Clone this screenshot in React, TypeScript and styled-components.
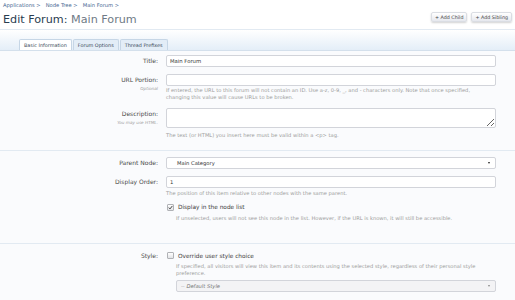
import styled, { createGlobalStyle } from 'styled-components';

const GlobalStyle = createGlobalStyle`
  body {
    margin: 0;
    background: #ffffff;
    font-family: "DejaVu Sans", "Liberation Sans", sans-serif;
    color: #333;
  }
`;

const Header = styled.div`
  padding: 0 3px;
`;

const Breadcrumb = styled.div`
  display: flex;
  gap: 5px;
  height: 10px;
  font-size: 5.2px;
  line-height: 10px;
  color: #3f6590;
`;

const TitleRow = styled.div`
  display: flex;
  justify-content: space-between;
  align-items: flex-start;
  height: 19px;
`;

const Title = styled.h1`
  margin: 3px 0 0;
  font-size: 11.2px;
  line-height: 13px;
  font-weight: normal;
  color: #2a3d50;

  span {
    color: #6f7b86;
  }
`;

const ButtonGroup = styled.div`
  display: flex;
  gap: 4px;
  margin-top: 2px;
`;

const SmallButton = styled.button`
  height: 10px;
  padding: 0 3px;
  font-family: inherit;
  font-size: 4.8px;
  color: #444;
  border: 1px solid #dadde3;
  border-radius: 2px;
  background: linear-gradient(#ffffff, #e6e8ee);
  box-shadow: 0 1px 2px rgba(0, 0, 0, 0.18);
`;

const TabBar = styled.div`
  display: flex;
  align-items: flex-end;
  gap: 1px;
  height: 21px;
  padding-left: 19px;
  border-top: 1px solid #e2eaf2;
  box-sizing: border-box;
  background: linear-gradient(#ffffff, #e4eef8);
`;

const Tab = styled.div<{ $active?: boolean }>`
  height: 11px;
  padding: 0 4px;
  font-size: 4.9px;
  line-height: 11px;
  color: #3a4a5a;
  border: 1px solid #c6d6e6;
  border-bottom: none;
  border-radius: 2px 2px 0 0;
  background: ${p => (p.$active ? '#ffffff' : '#e3edf7')};
  box-sizing: border-box;
`;

const Form = styled.div`
  background: #fafbfd;
  border-top: 1px solid #d4e0ec;
  padding-bottom: 20px;
`;

const Section = styled.div<{ $top: number; $bottom: number; $last?: boolean }>`
  padding-top: ${p => p.$top}px;
  padding-bottom: ${p => p.$bottom}px;
  border-bottom: ${p => (p.$last ? 'none' : '1px solid #e2eaf2')};
`;

const Unit = styled.div<{ $gap?: number }>`
  display: grid;
  grid-template-columns: 158px 1fr;
  column-gap: 8px;
  padding-right: 19px;
  margin-bottom: ${p => p.$gap ?? 0}px;
`;

const Label = styled.div<{ $lh?: number }>`
  text-align: right;
  font-size: 6px;
  line-height: ${p => p.$lh ?? 12}px;
  color: #4a4a4a;
`;

const Hint = styled.div`
  text-align: right;
  font-size: 4.2px;
  line-height: 5px;
  font-style: italic;
  color: #a0a0a0;
`;

const Control = styled.div``;

const TextInput = styled.input`
  display: block;
  width: 100%;
  height: 12px;
  box-sizing: border-box;
  padding: 0 3px;
  font-family: inherit;
  font-size: 5.3px;
  color: #333;
  background: #fff;
  border: 1px solid #d2d4da;
  border-radius: 2px;
  outline: none;
`;

const TextArea = styled.textarea`
  display: block;
  width: 100%;
  height: 20px;
  box-sizing: border-box;
  padding: 2px 3px;
  font-family: inherit;
  font-size: 5.3px;
  background: #fff;
  border: 1px solid #d2d4da;
  border-radius: 2px;
  resize: vertical;
  outline: none;
`;

const Select = styled.div<{ $disabled?: boolean; $indent?: number }>`
  display: flex;
  align-items: center;
  justify-content: space-between;
  height: 12px;
  box-sizing: border-box;
  padding: 0 5px 0 ${p => p.$indent ?? 10}px;
  font-size: 5.2px;
  font-style: ${p => (p.$disabled ? 'italic' : 'normal')};
  color: ${p => (p.$disabled ? '#777' : '#333')};
  background: ${p => (p.$disabled ? '#f3f3f5' : '#fff')};
  border: 1px solid #d2d4da;
  border-radius: 2px;

  &::after {
    content: '';
    border-left: 1.6px solid transparent;
    border-right: 1.6px solid transparent;
    border-top: 2.4px solid ${p => (p.$disabled ? '#888' : '#222')};
  }
`;

const Explain = styled.div<{ $top?: number; $indent?: number }>`
  margin-top: ${p => p.$top ?? 0}px;
  padding-left: ${p => p.$indent ?? 0}px;
  font-size: 5.15px;
  line-height: 7px;
  color: #9c9c9c;
  white-space: nowrap;
`;

const CheckRow = styled.div`
  display: flex;
  align-items: center;
  gap: 4px;
  height: 8px;
  font-size: 5.8px;
  color: #3a3a3a;
`;

const Box = styled.span`
  display: inline-flex;
  align-items: center;
  justify-content: center;
  width: 5px;
  height: 5px;
  margin-left: 1px;
  border: 1px solid #b0b2b6;
  border-radius: 1px;
  background: linear-gradient(#ffffff, #e2e3e6);

  svg {
    width: 5px;
    height: 5px;
  }
`;

const CheckIndent = styled.div`
  padding-left: 10px;
  margin-top: 2.5px;
`;

const CheckBox = ({ checked }: { checked?: boolean }) => (
  <Box>
    {checked && (
      <svg viewBox="0 0 10 10">
        <path d="M1.5 5.2 L4 7.8 L8.8 1.8" fill="none" stroke="#333" strokeWidth="1.8" />
      </svg>
    )}
  </Box>
);

export default function App() {
  return (
    <>
      <GlobalStyle />
      <Header>
        <Breadcrumb>
          <span>Applications &gt;</span>
          <span>Node Tree &gt;</span>
          <span>Main Forum &gt;</span>
        </Breadcrumb>
        <TitleRow>
          <Title>
            Edit Forum: <span>Main Forum</span>
          </Title>
          <ButtonGroup>
            <SmallButton>+ Add Child</SmallButton>
            <SmallButton>+ Add Sibling</SmallButton>
          </ButtonGroup>
        </TitleRow>
      </Header>

      <TabBar>
        <Tab $active>Basic Information</Tab>
        <Tab>Forum Options</Tab>
        <Tab>Thread Prefixes</Tab>
      </TabBar>

      <Form>
        <Section $top={4} $bottom={11}>
          <Unit $gap={7}>
            <Label>Title:</Label>
            <Control>
              <TextInput defaultValue="Main Forum" />
            </Control>
          </Unit>
          <Unit $gap={7}>
            <div>
              <Label>URL Portion:</Label>
              <Hint>Optional</Hint>
            </div>
            <Control>
              <TextInput />
              <Explain $top={1}>
                If entered, the URL to this forum will not contain an ID. Use a-z, 0-9, _, and - characters only. Note that once specified,
                <br />
                changing this value will cause URLs to be broken.
              </Explain>
            </Control>
          </Unit>
          <Unit>
            <div>
              <Label>Description:</Label>
              <Hint>You may use HTML.</Hint>
            </div>
            <Control>
              <TextArea />
              <Explain $top={4}>The text (or HTML) you insert here must be valid within a &lt;p&gt; tag.</Explain>
            </Control>
          </Unit>
        </Section>

        <Section $top={6} $bottom={21}>
          <Unit $gap={7}>
            <Label>Parent Node:</Label>
            <Control>
              <Select>Main Category</Select>
            </Control>
          </Unit>
          <Unit $gap={6}>
            <Label>Display Order:</Label>
            <Control>
              <TextInput defaultValue="1" />
              <Explain $top={2}>The position of this item relative to other nodes with the same parent.</Explain>
            </Control>
          </Unit>
          <Unit>
            <div />
            <Control>
              <CheckRow>
                <CheckBox checked />
                Display in the node list
              </CheckRow>
              <Explain $top={3.5} $indent={10}>
                If unselected, users will not see this node in the list. However, if the URL is known, it will still be accessible.
              </Explain>
            </Control>
          </Unit>
        </Section>

        <Section $top={8} $bottom={0} $last>
          <Unit>
            <Label $lh={8}>Style:</Label>
            <Control>
              <CheckRow>
                <CheckBox />
                Override user style choice
              </CheckRow>
              <Explain $top={3.5} $indent={10}>
                If specified, all visitors will view this item and its contents using the selected style, regardless of their personal style
                <br />
                preference.
              </Explain>
              <CheckIndent>
                <Select $disabled $indent={4}>-- Default Style</Select>
              </CheckIndent>
            </Control>
          </Unit>
        </Section>
      </Form>
    </>
  );
}
